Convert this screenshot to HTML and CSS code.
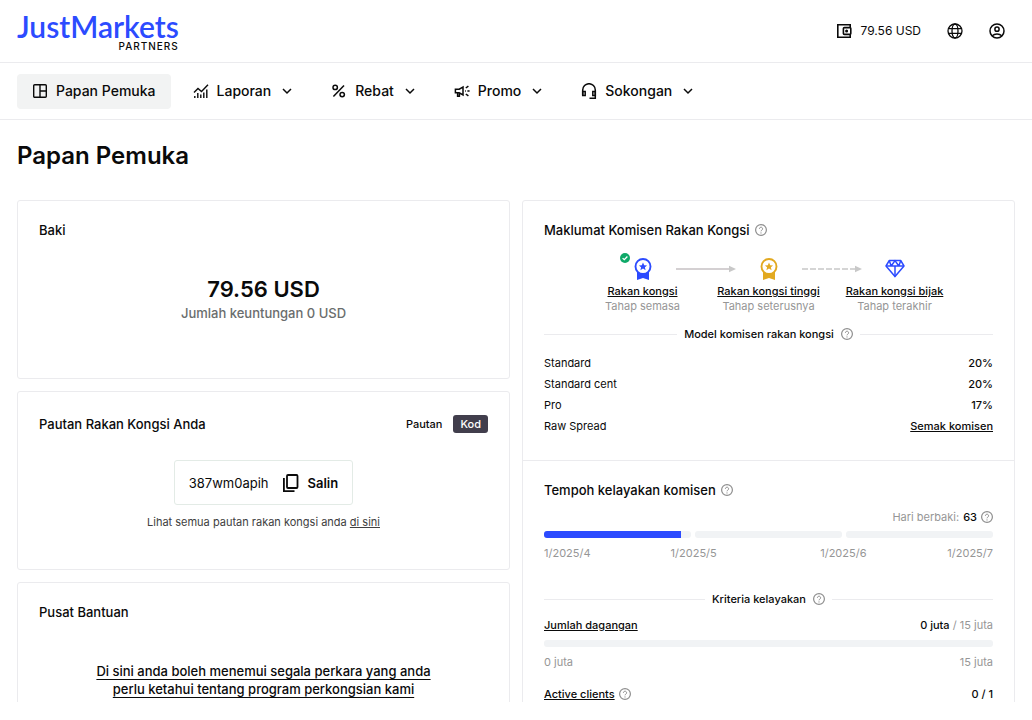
FILE: index.html
```html
<!DOCTYPE html>
<html lang="ms">
<head>
  <meta charset="UTF-8" />
  <meta name="viewport" content="width=device-width, initial-scale=1.0"/>
  <title>Papan Pemuka - JustMarkets Partners</title>
  <link rel="stylesheet" href="styles.css">
</head>
<body>
  <!-- Shared icons -->
  <svg class="sprite" aria-hidden="true">
    <symbol id="help" viewBox="0 0 12 12">
      <circle cx="6" cy="6" r="5.4" fill="none" stroke="currentColor" stroke-width="1.2"/>
      <path d="M4.4 4.8a1.6 1.6 0 1 1 2.5 1.3c-.6.4-.9.6-.9 1.2" fill="none" stroke="currentColor"/>
      <circle cx="6" cy="8.9" r=".6" fill="currentColor"/>
    </symbol>
    <symbol id="chevron" viewBox="0 0 12 12">
      <path d="M2 4l4 4 4-4" fill="none" stroke="currentColor" stroke-width="1.5"/>
    </symbol>
    <symbol id="medal" viewBox="0 0 18 22">
      <path d="M3 13v9l6-2 6 2v-9z" fill="currentColor"/>
      <circle cx="9" cy="8.5" r="7.5" fill="#fff" stroke="currentColor" stroke-width="1.9"/>
      <path d="M9 4.500l1.200 2.700 2.900.2-2.200 1.900.7 2.900L9 10.600l-2.600 1.600.7-2.900-2.200-1.900 2.900-.2z" fill="currentColor"/>
    </symbol>
  </svg>

  <div class="page">
    <header class="header">
      <a href="#" class="logo">
        <span class="logo-name">JustMarkets</span>
        <span class="logo-sub">PARTNERS</span>
      </a>
      <div class="account">
        <a href="#" class="wallet">
          <svg class="icon" viewBox="0 0 16 16" fill="none" stroke="currentColor" stroke-width="1.6">
            <path d="M14.2 4.5V1.8H1.8v12.4h12.4v-2.7"/>
            <rect x="7.4" y="4.6" width="7.4" height="6.8" rx="1"/>
            <circle cx="10.6" cy="8" r=".7"/>
          </svg>
          79.56 USD
        </a>
        <button class="icon-btn" aria-label="Bahasa">
          <svg class="icon" viewBox="0 0 16 16" fill="none" stroke="currentColor" stroke-width="1.3">
            <circle cx="8" cy="8" r="7"/>
            <ellipse cx="8" cy="8" rx="3" ry="7"/>
            <path d="M1.5 5.6h13M1.5 10.4h13"/>
          </svg>
        </button>
        <button class="icon-btn" aria-label="Akaun">
          <svg class="icon" viewBox="0 0 16 16" fill="none" stroke="currentColor" stroke-width="1.5">
            <circle cx="8" cy="8" r="7"/>
            <circle cx="8" cy="6.2" r="2.1"/>
            <path d="M3.2 12.8c2.6-2.4 7-2.4 9.6 0"/>
          </svg>
        </button>
      </div>
    </header>

    <nav class="nav">
      <a href="#" class="nav-item active">
        <svg class="icon" viewBox="0 0 16 16" fill="none" stroke="currentColor" stroke-width="1.4">
          <rect x="1.7" y="1.7" width="12.6" height="12.6" rx="1"/>
          <path d="M8 1.7v12.6M8 8h6.3"/>
        </svg>
        Papan Pemuka
      </a>
      <button class="nav-item">
        <svg class="icon" viewBox="0 0 16 16" fill="none" stroke="currentColor" stroke-width="1.4">
          <path d="M1 9.5l4-4 3.5 3L15 1.8"/>
          <path d="M1.8 15v-2M4.8 15v-5M7.8 15v-3.5M10.8 15V9.5M13.8 15V6.5"/>
        </svg>
        Laporan
        <svg class="chevron"><use href="#chevron"/></svg>
      </button>
      <button class="nav-item">
        <svg class="icon" viewBox="0 0 16 16" fill="none" stroke="currentColor" stroke-width="1.5">
          <circle cx="4.2" cy="4.4" r="2.2"/>
          <circle cx="11.2" cy="11.600" r="2.2"/>
          <path d="M13 2.400L2.400 13.600"/>
        </svg>
        Rebat
        <svg class="chevron"><use href="#chevron"/></svg>
      </button>
      <button class="nav-item">
        <svg class="icon" viewBox="0 0 16 16" fill="none" stroke="currentColor" stroke-width="1.5">
          <path d="M1.4 6.2h3.8L9 4v8L5.200 9.800H1.400zM3.600 10v3.200h1.800V10"/>
          <path d="M11 8h.8M13.400 8h2.200M11.800 5l2.600-1.900M11.800 11l2.600 1.900"/>
        </svg>
        Promo
        <svg class="chevron"><use href="#chevron"/></svg>
      </button>
      <button class="nav-item">
        <svg class="icon" viewBox="0 0 16 16" fill="none" stroke="currentColor" stroke-width="1.5">
          <path d="M1.700 12V7a6.300 6.300 0 0 1 12.600 0v8.200H8.500"/>
          <path d="M1.700 8.500h2.500v4H1.700zM11.800 8.500h2.500v4h-2.500z"/>
        </svg>
        Sokongan
        <svg class="chevron"><use href="#chevron"/></svg>
      </button>
    </nav>

    <main class="main">
      <h1>Papan Pemuka</h1>

      <div class="columns">
        <div class="column">
          <section class="card">
            <h2>Baki</h2>
            <div class="balance">
              <p class="amount">79.56 USD</p>
              <p class="profit">Jumlah keuntungan 0 USD</p>
            </div>
          </section>

          <section class="card">
            <div class="card-head">
              <h2>Pautan Rakan Kongsi Anda</h2>
              <div class="switch">
                <button class="switch-btn">Pautan</button>
                <button class="switch-btn selected">Kod</button>
              </div>
            </div>
            <div class="code-box">
              <span>387wm0apih</span>
              <button class="copy-btn">
                <svg viewBox="0 0 18 20" fill="none" stroke="currentColor" stroke-width="1.8">
                  <rect x="5" y="2" width="10.500" height="13" rx="1"/>
                  <path d="M1.900 5v13.100h10.600"/>
                </svg>
                Salin
              </button>
            </div>
            <p class="hint">Lihat semua pautan rakan kongsi anda <a href="#">di sini</a></p>
          </section>

          <section class="card">
            <h2>Pusat Bantuan</h2>
            <p class="help-text"><a href="#">Di sini anda boleh menemui segala perkara yang anda perlu ketahui tentang program perkongsian kami</a></p>
          </section>
        </div>

        <div class="column">
          <div class="panel">
            <section class="panel-part">
              <h2>Maklumat Komisen Rakan Kongsi <svg class="help"><use href="#help"/></svg></h2>

              <div class="level-icons">
                <div class="level-icon">
                  <svg class="level-check" viewBox="0 0 10 10">
                    <circle cx="5" cy="5" r="5" fill="#0ea968"/>
                    <path d="M2.600 5.100l1.700 1.600 3.100-3.200" fill="none" stroke="#fff" stroke-width="1.300"/>
                  </svg>
                  <svg class="medal blue"><use href="#medal"/></svg>
                </div>
                <svg class="arrow" viewBox="0 0 60 8">
                  <path d="M0 4h54" stroke="#d4d0d2" stroke-width="2"/>
                  <path d="M53 .8L60 4l-7 3.200z" fill="#c8c8c8"/>
                </svg>
                <div class="level-icon">
                  <svg class="medal gold"><use href="#medal"/></svg>
                </div>
                <svg class="arrow" viewBox="0 0 60 8">
                  <path d="M0 4h54" stroke="#c8c8c8" stroke-width="1.500" stroke-dasharray="6 2"/>
                  <path d="M53 .8L60 4l-7 3.200z" fill="#c8c8c8"/>
                </svg>
                <div class="level-icon">
                  <svg class="medal blue" viewBox="0 0 20 20" fill="none" stroke="currentColor" stroke-width="1.500" stroke-linejoin="round">
                    <path d="M4.200 1.600h11.600L19 7l-9 10.600L1 7z"/>
                    <path d="M1 7h18M10 7v10.600M4.200 1.600L6.200 7 10 1.600 13.800 7l2-5.400"/>
                  </svg>
                </div>
              </div>

              <div class="levels">
                <div class="level"><a href="#">Rakan kongsi</a><span>Tahap semasa</span></div>
                <div class="level"><a href="#">Rakan kongsi tinggi</a><span>Tahap seterusnya</span></div>
                <div class="level"><a href="#">Rakan kongsi bijak</a><span>Tahap terakhir</span></div>
              </div>

              <h3 class="divider">Model komisen rakan kongsi <svg class="help"><use href="#help"/></svg></h3>

              <table class="rates">
                <tr><th scope="row">Standard</th><td>20%</td></tr>
                <tr><th scope="row">Standard cent</th><td>20%</td></tr>
                <tr><th scope="row">Pro</th><td>17%</td></tr>
                <tr><th scope="row">Raw Spread</th><td><a href="#">Semak komisen</a></td></tr>
              </table>
            </section>

            <section class="panel-part">
              <h2>Tempoh kelayakan komisen <svg class="help"><use href="#help"/></svg></h2>
              <p class="days">Hari berbaki: <b>63</b> <svg class="help"><use href="#help"/></svg></p>
              <div class="period">
                <div class="bar"><div class="bar-fill" style="width: 93%"></div></div>
                <div class="bar"></div>
                <div class="bar"></div>
              </div>
              <div class="dates">
                <span>1/2025/4</span>
                <span>1/2025/5</span>
                <span>1/2025/6</span>
                <span>1/2025/7</span>
              </div>

              <h3 class="divider">Kriteria kelayakan <svg class="help"><use href="#help"/></svg></h3>

              <div class="criteria">
                <a href="#">Jumlah dagangan</a>
                <span class="muted"><b>0 juta</b> / 15 juta</span>
              </div>
              <div class="bar"></div>
              <div class="range muted">
                <span>0 juta</span>
                <span>15 juta</span>
              </div>
              <div class="criteria">
                <span class="with-help"><a href="#">Active clients</a> <svg class="help"><use href="#help"/></svg></span>
                <b>0 / 1</b>
              </div>
            </section>
          </div>
        </div>
      </div>
    </main>
  </div>
</body>
</html>
```
FILE: styles.css
```css
* {
  box-sizing: border-box;
}

body {
  margin: 0;
  background-color: #fff;
  color: #0a0a0a;
  font-family: Inter, sans-serif;
  font-size: 11px;
  line-height: 16px;
}

h1, h2, h3, p {
  margin: 0;
}

a {
  color: inherit;
}

b {
  font-weight: 500;
}

button {
  padding: 0;
  border: none;
  background: none;
  color: inherit;
  font: inherit;
  cursor: pointer;
}

svg {
  display: block;
  flex-shrink: 0;
}

.sprite {
  position: absolute;
  width: 0;
  height: 0;
}

.page {
  height: calc(100vh - 18px);
  overflow: hidden;
}

.icon {
  width: 16px;
  height: 16px;
}

.help {
  width: 12px;
  height: 12px;
  color: #8e8e8e;
}

.muted {
  color: #969696;
}

.muted b {
  color: #0a0a0a;
}

/* Header */
.header {
  display: flex;
  justify-content: space-between;
  align-items: center;
  height: 63px;
  padding: 0 27px 0 17px;
  border-bottom: 1px solid #ebebee;
}

.logo {
  display: flex;
  flex-direction: column;
  align-items: flex-end;
  text-decoration: none;
}

.logo-name {
  color: #2c4bff;
  font-family: Lato, sans-serif;
  font-size: 30px;
  font-weight: 600;
  line-height: 30px;
}

.logo-sub {
  font-size: 10px;
  font-weight: 500;
  line-height: 10px;
  letter-spacing: 1px;
}

.account {
  display: flex;
  align-items: center;
  gap: 26px;
}

.wallet {
  display: flex;
  align-items: center;
  gap: 9px;
  font-size: 12px;
  text-decoration: none;
}

/* Navigation */
.nav {
  display: flex;
  align-items: center;
  gap: 7px;
  height: 57px;
  padding: 0 17px;
  border-bottom: 1px solid #ebebee;
}

.nav-item {
  display: flex;
  align-items: center;
  gap: 8px;
  height: 35px;
  padding: 0 16px 0 15px;
  border-radius: 4px;
  font-size: 14px;
  font-weight: 500;
  text-decoration: none;
}

.nav-item.active {
  padding-right: 15px;
  background-color: #f2f3f3;
}

.chevron {
  width: 12px;
  height: 12px;
  margin-left: 2px;
}

/* Content */
.main {
  padding: 20px 17px;
}

h1 {
  margin-bottom: 28px;
  font-size: 24px;
  font-weight: 600;
  line-height: 32px;
}

h2 {
  display: flex;
  align-items: center;
  gap: 5px;
  font-size: 13px;
  font-weight: 500;
  line-height: 20px;
}

.columns {
  display: grid;
  grid-template-columns: 1fr 1fr;
  gap: 12px;
}

.column {
  display: flex;
  flex-direction: column;
  gap: 12px;
}

.card {
  min-height: 179px;
  padding: 19px 21px;
  border: 1px solid #ebebee;
  border-radius: 3px;
}

.card-head {
  display: flex;
  justify-content: space-between;
  align-items: center;
  margin-top: 3px;
}

.balance {
  margin-top: 34px;
  text-align: center;
}

.amount {
  font-size: 22px;
  font-weight: 600;
  line-height: 30px;
}

.profit {
  color: #6a6d6d;
  font-size: 13px;
  font-weight: 500;
  line-height: 18px;
}

.switch {
  display: flex;
  gap: 4px;
}

.switch-btn {
  height: 18px;
  padding: 0 7px;
  border-radius: 3px;
  font-weight: 500;
}

.switch-btn.selected {
  background-color: #413e4c;
  color: #fff;
}

.code-box {
  display: flex;
  align-items: center;
  gap: 13px;
  width: fit-content;
  height: 45px;
  margin: 26px auto 9px;
  padding: 0 14px;
  border: 1px solid #e3ebe6;
  border-radius: 3px;
  font-size: 13px;
}

.copy-btn {
  display: flex;
  align-items: center;
  gap: 8px;
  font-weight: 600;
}

.copy-btn svg {
  width: 18px;
  height: 20px;
}

.hint {
  color: #404040;
  text-align: center;
}

.help-text {
  max-width: 350px;
  margin: 40px auto 0;
  font-size: 13px;
  font-weight: 500;
  line-height: 18px;
  text-align: center;
}

.help-text a {
  text-underline-offset: 3px;
}

/* Commission panel */
.panel {
  border: 1px solid #ebebee;
  border-radius: 3px;
}

.panel-part {
  padding: 19px 21px 24px;
}

.panel-part + .panel-part {
  border-top: 1px solid #ebebee;
}

.level-icons {
  display: flex;
  justify-content: center;
  align-items: center;
  margin-top: 18px;
}

.level-icon {
  position: relative;
  display: flex;
  justify-content: center;
  width: 66px;
}

.medal {
  width: 20px;
  height: 22px;
}

.blue {
  color: #2c4bff;
}

.gold {
  color: #e2a920;
}

.level-check {
  position: absolute;
  top: -5px;
  left: 10px;
  width: 10px;
  height: 10px;
}

.arrow {
  width: 60px;
  height: 8px;
}

.levels {
  display: grid;
  grid-template-columns: repeat(3, 126px);
  justify-content: center;
  margin-top: 4px;
}

.level {
  display: flex;
  flex-direction: column;
  align-items: center;
  line-height: 15px;
}

.level a {
  font-weight: 500;
}

.level span {
  color: #969696;
}

.divider {
  display: flex;
  align-items: center;
  gap: 7px;
  margin: 12px 0 10px;
  font-size: 11px;
  font-weight: 500;
}

.divider::before,
.divider::after {
  content: "";
  flex: 1;
  height: 1px;
  background-color: #ebebee;
}

.rates {
  width: 100%;
  border-collapse: collapse;
}

.rates th,
.rates td {
  height: 21px;
  padding: 0;
}

.rates th {
  font-weight: 400;
  text-align: left;
}

.rates td {
  font-weight: 500;
  text-align: right;
}

.days {
  display: flex;
  justify-content: flex-end;
  align-items: center;
  gap: 4px;
  margin: 9px 0 6px;
  color: #969696;
}

.days b {
  color: #0a0a0a;
}

.period {
  display: grid;
  grid-template-columns: repeat(3, 1fr);
  gap: 4px;
}

.bar {
  height: 7px;
  overflow: hidden;
  border-radius: 3px;
  background-color: #f1f3f5;
}

.bar-fill {
  height: 100%;
  background-color: #2c4bff;
}

.dates {
  display: grid;
  grid-template-columns: 1fr 2fr 2fr 1fr;
  margin: 7px 0 30px;
  color: #969696;
  text-align: center;
}

.dates span:first-child {
  text-align: left;
}

.dates span:last-child {
  text-align: right;
}

.criteria,
.range {
  display: flex;
  justify-content: space-between;
  align-items: center;
}

.criteria {
  margin-bottom: 7px;
}

.criteria a {
  font-weight: 500;
}

.range {
  margin: 7px 0 16px;
}

.with-help {
  display: flex;
  align-items: center;
  gap: 4px;
}
```
